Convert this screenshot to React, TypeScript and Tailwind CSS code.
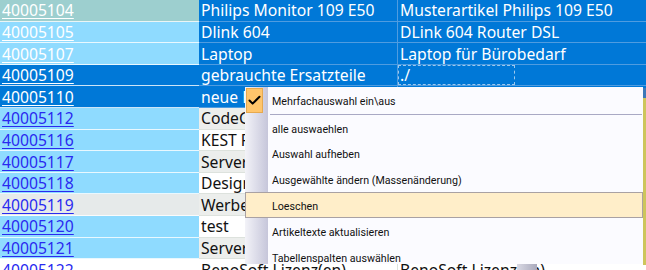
import { Check } from "lucide-react";

type Row = {
  id: string;
  name: string;
  desc: string;
  idBg: string;
  idText: string;
  cellBg: string;
  cellText: string;
  line: string;
  colLine: string;
  focus?: boolean;
};

const SEL = "bg-[#0078d7]";
const LIGHT = "bg-[#8fdbff]";
const GRAY = "bg-[#eceeec]";

const mk = (
  id: string,
  name: string,
  desc: string,
  idBg: string,
  idWhite: boolean,
  cellBg: string,
  focus = false
): Row => {
  const selected = cellBg === SEL;
  return {
    id,
    name,
    desc,
    idBg,
    idText: idWhite ? "text-white decoration-white" : "text-[#2a2af0] decoration-[#2a2af0]",
    cellBg,
    cellText: selected ? "text-white" : "text-[#111]",
    line: selected ? "border-[#4f9ce0]" : "border-[#dde2dd]",
    colLine: selected ? "border-[#4f9ce0]" : "border-[#8a8a8a]",
    focus,
  };
};

const ROWS: Row[] = [
  mk("40005104", "Philips Monitor 109 E50", "Musterartikel Philips 109 E50", "bg-[#9dcfcf]", true, SEL),
  mk("40005105", "Dlink 604", "DLink 604 Router DSL", LIGHT, true, SEL),
  mk("40005107", "Laptop", "Laptop für Bürobedarf", LIGHT, true, SEL),
  mk("40005109", "gebrauchte Ersatzteile", "./", SEL, true, SEL, true),
  mk("40005110", "neue Ersatzteile", "", SEL, true, SEL),
  mk("40005112", "CodeGear Lizenz", "", LIGHT, false, GRAY),
  mk("40005116", "KEST Rechnung", "", LIGHT, false, "bg-white"),
  mk("40005117", "Server-Wartung", "", LIGHT, false, GRAY),
  mk("40005118", "Designarbeiten", "", LIGHT, false, "bg-white"),
  mk("40005119", "Werbeagentur", "", "bg-[#e6eaea]", false, GRAY),
  mk("40005120", "test", "", LIGHT, false, "bg-white"),
  mk("40005121", "Server/Netzwerk", "", LIGHT, false, GRAY),
  mk("40005122", "BenoSoft Lizenz(en)", "BenoSoft Lizenz(en)", "bg-white", false, "bg-white"),
];

const MENU = [
  "alle auswaehlen",
  "Auswahl aufheben",
  "Ausgewählte ändern (Massenänderung)",
  "Loeschen",
  "Artikeltexte aktualisieren",
  "Tabellenspalten auswählen",
];

function GridRow({ r }: { r: Row }) {
  return (
    <div className="flex h-[21.6px] shrink-0">
      <div className={`w-[199px] shrink-0 pl-[2px] pt-[2px] flex items-center border-b border-white/80 ${r.idBg}`}>
        <span className={`underline underline-offset-2 ${r.idText}`}>{r.id}</span>
      </div>
      <div className={`w-[198px] shrink-0 pl-[2px] pt-[2px] flex items-center border-b whitespace-nowrap overflow-hidden ${r.cellBg} ${r.cellText} ${r.line}`}>
        {r.name}
      </div>
      <div className={`relative flex-1 pl-[2px] pt-[2px] flex items-center border-b border-l whitespace-nowrap overflow-hidden ${r.cellBg} ${r.cellText} ${r.line} ${r.colLine}`}>
        {r.desc}
        {r.focus && (
          <div className="absolute left-0 top-0 bottom-0 w-[117px] border border-dashed border-[#9cc8ee]" />
        )}
      </div>
    </div>
  );
}

export default function App() {
  return (
    <div
      className="relative w-[646px] h-[270px] overflow-hidden bg-white text-[15.7px] leading-none"
      style={{ fontFamily: '"Noto Sans", "Open Sans", sans-serif' }}
    >
      <div className="flex flex-col">
        {ROWS.map((r) => (
          <GridRow key={r.id} r={r} />
        ))}
      </div>

      {/* context menu */}
      <div
        className="absolute left-[245px] top-[87px] w-[398px] h-[177px] overflow-hidden bg-[#fbfbff] text-[10.7px] text-[#111]"
        style={{ fontFamily: 'Roboto, "Noto Sans", sans-serif' }}
      >
        <div className="absolute left-0 top-0 bottom-0 w-[23px] bg-gradient-to-r from-[#f3f3f8] to-[#c6c6da]" />
        <div className="relative flex flex-col pt-[1px]">
          <div className="flex items-center h-[25px]">
            <div className="ml-[1px] w-[17px] h-[25px] bg-[#ffc56b] border border-[#e7a94e] flex items-center justify-center">
              <Check size={15} strokeWidth={3.2} className="text-black" />
            </div>
            <span className="ml-[9px] pt-[4px]">Mehrfachauswahl ein\aus</span>
          </div>
          <div className="h-[2px] ml-[25px] mr-[1px] border-b border-[#a9a9c4]" />
          {MENU.map((m) => (
            <div
              key={m}
              className={`flex items-center h-[25.8px] ${
                m === "Loeschen" ? "bg-[#ffeec9] border border-[#a9a1a3]" : "border border-transparent"
              }`}
            >
              <span className="ml-[26px] pt-[4px]">{m}</span>
            </div>
          ))}
        </div>
      </div>

      {/* shadow strips */}
      <div className="absolute left-[643px] top-[88px] w-[3px] h-[177px] flex flex-col">
        <div className="h-[10px] bg-[#3c78b8]" />
        <div className="flex-1 bg-[#cdc55c]" />
      </div>
      <div className="absolute left-[517px] top-[264px] w-[20px] h-[6px] bg-gradient-to-r from-[#d9d9e4] to-[#a9a9bc]" />
    </div>
  );
}
